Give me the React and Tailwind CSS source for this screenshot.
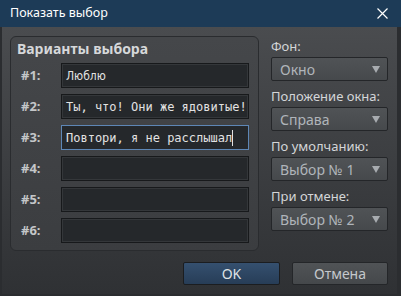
import React from 'react';

const rows = [
  { n: '#1:', value: 'Люблю', cond: true },
  { n: '#2:', value: 'Ты, что! Они же ядовитые!' },
  { n: '#3:', value: 'Повтори, я не расслышал', focused: true },
  { n: '#4:', value: '' },
  { n: '#5:', value: '' },
  { n: '#6:', value: '' },
];

const combos = [
  { label: 'Фон:', value: 'Окно' },
  { label: 'Положение окна:', value: 'Справа' },
  { label: 'По умолчанию:', value: 'Выбор № 1' },
  { label: 'При отмене:', value: 'Выбор № 2' },
];

const Combo = ({ label, value }) => (
  <div className="flex flex-col">
    <div className="h-[16px] leading-[16px] text-[13px] text-[#d4d6d8] mb-[3px]">{label}</div>
    <div className="h-[24px] flex items-center justify-between pl-[8px] pr-[7px] rounded-[2px] border border-[#242629] bg-gradient-to-b from-[#505356] to-[#46494c]">
      <span className="text-[14px] text-[#b0b5ba]">{value}</span>
      <svg width="8" height="7" viewBox="0 0 8 7">
        <path d="M0 0H8L4 7Z" fill="#a8acb0" />
      </svg>
    </div>
  </div>
);

export default function App() {
  return (
    <div className="w-[401px] h-[296px] flex flex-col font-['Noto_Sans',sans-serif]">
      <div className="h-[27px] shrink-0 bg-[#1d3b57] flex items-center justify-between pl-[10px] pr-[13px]">
        <span className="text-[12.5px] text-white">Показать выбор</span>
        <svg width="11" height="11" viewBox="0 0 11 11">
          <path d="M0.5 0.5L10.5 10.5M10.5 0.5L0.5 10.5" stroke="#ffffff" strokeWidth="1.2" />
        </svg>
      </div>
      <div className="flex-1 flex flex-col border-l-2 border-r-[4px] border-b-2 border-[#2b2d30] bg-gradient-to-b from-[#4a4c4f] to-[#2f3134] pl-[8px] pr-[9px] pt-[9px]">
        <div className="flex items-start gap-[12px]">
          <div className="w-[249px] h-[215px] rounded-[6px] border border-[#2a2c2f] bg-gradient-to-b from-[#45474a] to-[#3b3d40] pl-[10px] pr-[9px] pt-[3px]">
            <div className="h-[18px] leading-[18px] text-[14px] font-bold text-[#d6d8da] -ml-[4px] mb-[5px]">Варианты выбора</div>
            <div className="flex flex-col gap-[6px]">
              {rows.map((r) => (
                <div key={r.n} className="flex items-center">
                  <span className="w-[40px] text-[13px] font-bold text-[#c4c6c8]">{r.n}</span>
                  <div
                    className={`flex-1 h-[25px] flex items-center pl-[4px] bg-[#25282b] border ${
                      r.focused ? 'border-[#5e87b6]' : 'border-[#17191b] shadow-[inset_0_0_0_1px_#34373a]'
                    }`}
                  >
                    {r.value && (
                      <span
                        className={
                          r.cond
                            ? "text-[12px] text-[#e2e2e2] font-['DejaVu_Sans_Condensed','DejaVu_Sans',sans-serif] [font-stretch:condensed]"
                            : "text-[12px] text-[#e2e2e2] font-['DejaVu_Sans_Mono',monospace] whitespace-pre"
                        }
                      >
                        {r.value}
                      </span>
                    )}
                    {r.focused && <span className="w-[1px] h-[16px] bg-[#e2e2e2]" />}
                  </div>
                </div>
              ))}
            </div>
          </div>
          <div className="w-[117px] mt-[2px] flex flex-col gap-[7px]">
            {combos.map((c) => (
              <Combo key={c.label} {...c} />
            ))}
          </div>
        </div>
        <div className="flex justify-end gap-[12px] mt-[11px]">
          <button className="w-[97px] h-[23px] rounded-[2px] border border-[#1b1d20] bg-gradient-to-b from-[#35506f] to-[#273d57] text-[14px] text-[#dfe2e5]">
            OK
          </button>
          <button className="w-[96px] h-[23px] rounded-[2px] border border-[#242629] bg-gradient-to-b from-[#505356] to-[#45484b] text-[14px] text-[#c4c8cc]">
            Отмена
          </button>
        </div>
      </div>
    </div>
  );
}
